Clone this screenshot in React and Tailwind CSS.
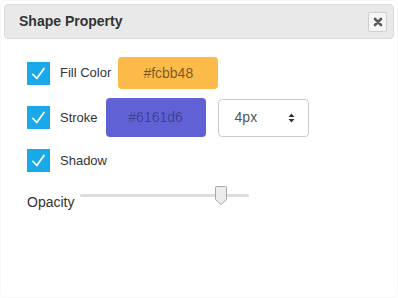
import React from "react";

function Check() {
  return (
    <div className="w-[23px] h-[23px] bg-[#1aa9e8] flex items-center justify-center shrink-0">
      <svg width="23" height="23" viewBox="0 0 23 23">
        <path d="M6 12.5 L9.8 16.5 L17 6.5" fill="none" stroke="#fff" strokeWidth="1.8" strokeLinecap="round" strokeLinejoin="round" />
      </svg>
    </div>
  );
}

export default function App() {
  return (
    <div className="w-[398px] h-[298px] bg-white p-[3px] rounded-[4px] border border-[#f8f8f8] overflow-hidden" style={{ fontFamily: '"Liberation Sans", Arial, sans-serif' }}>
      <div className="h-[35px] bg-[#e9e9e9] border border-[#dadada] rounded-[4px] flex items-center justify-between pl-[14px] pr-[6px]">
        <span className="text-[14px] font-bold text-[#333]">Shape Property</span>
        <div className="w-[19px] h-[20px] bg-[#f6f6f6] border border-[#cfcfcf] rounded-[2px] flex items-center justify-center">
          <svg width="10" height="10" viewBox="0 0 10 10">
            <path d="M2 2 L8 8 M8 2 L2 8" stroke="#5a5a5a" strokeWidth="2.6" strokeLinecap="round" />
          </svg>
        </div>
      </div>
      <div className="pl-[23px] flex flex-col">
        <div className="mt-[18px] h-[32px] flex items-center">
          <Check />
          <span className="ml-[10px] text-[13px] text-[#333]">Fill Color</span>
          <div className="ml-[7px] w-[100px] h-[32px] rounded-[4px] bg-[#fcbb48] flex items-center justify-center text-[14px] text-black/55">#fcbb48</div>
        </div>
        <div className="mt-[9px] h-[39px] flex items-center">
          <Check />
          <span className="ml-[10px] text-[13px] text-[#333]">Stroke</span>
          <div className="ml-[8px] w-[100px] h-[39px] rounded-[4px] bg-[#6161d6] flex items-center justify-center text-[14px] text-black/35">#6161d6</div>
          <div className="ml-[12px] w-[91px] h-[38px] rounded-[4px] border border-[#cccccc] bg-white flex items-center justify-between pl-[16px] pr-[13px] text-[14px] text-[#555]">
            <span>4px</span>
            <svg width="7" height="10" viewBox="0 0 7 10">
              <path d="M0.5 4 L3.5 0.5 L6.5 4 Z M0.5 6 L3.5 9.5 L6.5 6 Z" fill="#333" />
            </svg>
          </div>
        </div>
        <div className="mt-[12px] h-[23px] flex items-center">
          <Check />
          <span className="ml-[10px] text-[13px] text-[#333]">Shadow</span>
        </div>
        <div className="mt-[14px] flex items-start">
          <span className="mt-[8px] text-[14px] text-[#333] leading-[16px]">Opacity</span>
          <div className="ml-[6px] relative w-[169px] h-[20px]">
            <div className="absolute left-0 right-0 top-[8px] h-[3px] bg-[#dddddd] rounded-full" />
            <svg className="absolute left-[135px] top-0" width="12" height="19" viewBox="0 0 12 19">
              <path d="M0.5 1.5 Q0.5 0.5 1.5 0.5 L10.5 0.5 Q11.5 0.5 11.5 1.5 L11.5 13.5 L6 18.5 L0.5 13.5 Z" fill="#ececec" stroke="#a8a8a8" strokeWidth="1" />
            </svg>
          </div>
        </div>
      </div>
    </div>
  );
}
